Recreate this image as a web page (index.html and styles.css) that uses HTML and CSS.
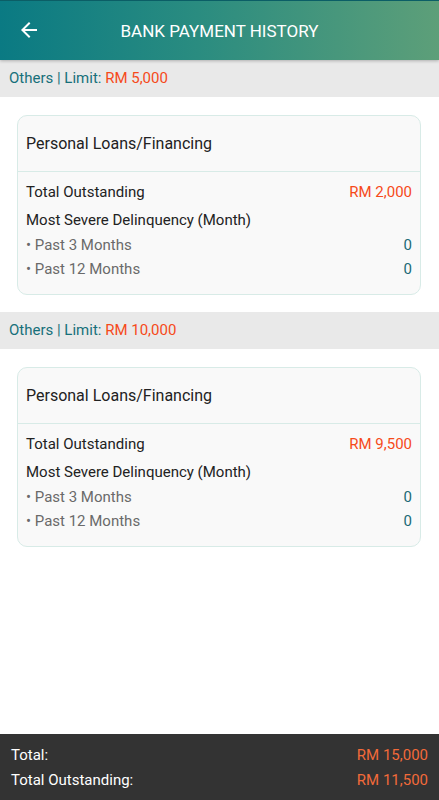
FILE: index.html
```html
<!DOCTYPE html>
<html lang="en">
<head>
  <meta charset="UTF-8" />
  <meta name="viewport" content="width=device-width, initial-scale=1.0"/>
  <title>Bank Payment History</title>
  <link rel="stylesheet" href="styles.css">
</head>
<body>
  <header class="topbar">
    <button class="back-btn" aria-label="Back">
      <svg width="24" height="24" viewBox="0 0 24 24"><path fill="#fff" d="M20 11H7.83l5.59-5.59L12 4l-8 8 8 8 1.41-1.41L7.83 13H20v-2z"/></svg>
    </button>
    <h1>BANK PAYMENT HISTORY</h1>
  </header>

  <main class="content">
    <div class="section-bar">Others | Limit: <span class="amount">RM 5,000</span></div>
    <div class="card">
      <div class="card-title">Personal Loans/Financing</div>
      <div class="card-body">
        <div class="row first"><span>Total Outstanding</span><span class="amount">RM 2,000</span></div>
        <div class="row heading"><span>Most Severe Delinquency (Month)</span></div>
        <div class="row sub"><span>• Past 3 Months</span><span class="count">0</span></div>
        <div class="row sub"><span>• Past 12 Months</span><span class="count">0</span></div>
      </div>
    </div>

    <div class="section-bar">Others | Limit: <span class="amount">RM 10,000</span></div>
    <div class="card">
      <div class="card-title">Personal Loans/Financing</div>
      <div class="card-body">
        <div class="row first"><span>Total Outstanding</span><span class="amount">RM 9,500</span></div>
        <div class="row heading"><span>Most Severe Delinquency (Month)</span></div>
        <div class="row sub"><span>• Past 3 Months</span><span class="count">0</span></div>
        <div class="row sub"><span>• Past 12 Months</span><span class="count">0</span></div>
      </div>
    </div>
  </main>

  <footer class="totals">
    <div class="row"><span>Total:</span><span class="amount">RM 15,000</span></div>
    <div class="row"><span>Total Outstanding:</span><span class="amount">RM 11,500</span></div>
  </footer>
</body>
</html>
```

FILE: styles.css
```css
* {
  box-sizing: border-box;
  margin: 0;
  padding: 0;
}
body {
  font-family: Roboto, "Noto Sans", sans-serif;
  background-color: #fff;
  color: #222;
  display: flex;
  flex-direction: column;
  min-height: 100vh;
}
.topbar {
  position: relative;
  height: 60px;
  display: flex;
  align-items: center;
  justify-content: center;
  background: linear-gradient(to right, #0a7a83, #2a8c80 45%, #5d9f79);
  border-top: 1px solid #0b5e66;
  box-shadow: 0 1px 3px rgba(0,0,0,0.25);
  z-index: 1;
}
.back-btn {
  position: absolute;
  left: 17px;
  top: 17px;
  background: none;
  border: none;
  width: 24px;
  height: 24px;
}
.topbar h1 {
  color: #fff;
  font-size: 17px;
  font-weight: 400;
}
.content {
  flex: 1;
}
.section-bar {
  background-color: #e9e9e9;
  height: 37px;
  line-height: 37px;
  padding-left: 9px;
  font-size: 15px;
  color: #17707a;
}
.amount {
  color: #f64a1a;
}
.card {
  margin: 18px 18px 17px 17px;
  background: #f9f9f9;
  border: 1px solid #d8ebe7;
  border-radius: 10px;
}
.card-title {
  height: 56px;
  line-height: 56px;
  padding-left: 8px;
  font-size: 16px;
  color: #222;
  border-bottom: 1px solid #d8ebe7;
}
.card-body {
  padding: 8px 8px 13px;
  font-size: 15px;
}
.row {
  display: flex;
  justify-content: space-between;
  line-height: 24px;
}
.row.first {
  margin-bottom: 4px;
}
.row.heading {
  margin-bottom: 1px;
}
.row.sub {
  color: #6a6a6a;
}
.count {
  color: #1b6a75;
}
.totals {
  background-color: #333;
  color: #fff;
  padding: 9px 11px 7px;
  font-size: 15px;
}
.totals .row {
  line-height: 25px;
}
.totals .amount {
  color: #f26a3a;
}
```
